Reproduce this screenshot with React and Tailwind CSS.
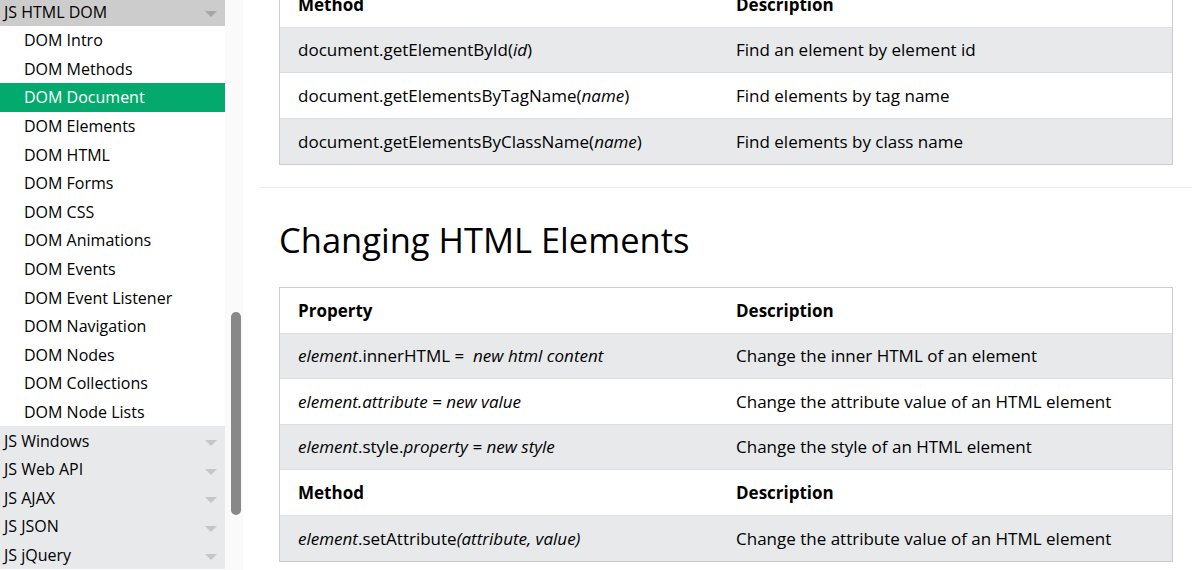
import React from "react";

const font = { fontFamily: '"Open Sans", "Noto Sans", sans-serif' };

const subItems = [
  "DOM Intro",
  "DOM Methods",
  "DOM Document",
  "DOM Elements",
  "DOM HTML",
  "DOM Forms",
  "DOM CSS",
  "DOM Animations",
  "DOM Events",
  "DOM Event Listener",
  "DOM Navigation",
  "DOM Nodes",
  "DOM Collections",
  "DOM Node Lists",
];

const topItems = ["JS Windows", "JS Web API", "JS AJAX", "JS JSON", "JS jQuery"];

function Caret({ color }) {
  return (
    <svg width="12" height="6" viewBox="0 0 12 6" className="shrink-0">
      <polygon points="0,0 12,0 6,6" fill={color} />
    </svg>
  );
}

function Sidebar() {
  return (
    <div className="w-[225px] shrink-0 -mt-[3px] text-[16px] text-black">
      <div className="h-[29px] bg-[#cccccc] flex items-center justify-between pl-[4px] pr-[8px]">
        <span>JS HTML DOM</span>
        <span className="mt-[5px]"><Caret color="#a6a6a6" /></span>
      </div>
      {subItems.map((s) => (
        <div
          key={s}
          className={`h-[28.6px] flex items-center pl-[24px] ${
            s === "DOM Document" ? "bg-[#04aa6d] text-white" : "bg-white"
          }`}
        >
          {s}
        </div>
      ))}
      {topItems.map((s) => (
        <div key={s} className="h-[28.6px] bg-[#e7e9eb] flex items-center justify-between pl-[4px] pr-[8px]">
          <span>{s}</span>
          <span className="mt-[5px]"><Caret color="#c4c6c8" /></span>
        </div>
      ))}
    </div>
  );
}

function Row({ left, right, head, gray }) {
  return (
    <div
      className={`flex h-[45.5px] border-b border-[#dddddd] last:border-b-0 items-center ${
        gray ? "bg-[#e7e9eb]" : "bg-white"
      } ${head ? "font-bold" : ""}`}
    >
      <div className="w-[438px] shrink-0 pl-[18px]">{left}</div>
      <div className="flex-1 pl-[18px]">{right}</div>
    </div>
  );
}

export default function App() {
  return (
    <div className="w-[1200px] h-[570px] overflow-hidden bg-white flex text-black" style={font}>
      <Sidebar />
      <div className="w-[18px] shrink-0 bg-[#fafafa] pt-[312px] flex justify-center">
        <div className="w-[10px] h-[203px] rounded-full bg-[#888888] ml-[4px]"></div>
      </div>
      <div className="flex-1 pl-[17px] pr-[8px] text-[17px]">
        <div className="mx-[19px] -mt-[19px] border border-[#cccccc]">
          <Row head left="Method" right="Description" />
          <Row
            gray
            left={<>document.getElementById(<i>id</i>)</>}
            right="Find an element by element id"
          />
          <Row
            left={<>document.getElementsByTagName(<i>name</i>)</>}
            right="Find elements by tag name"
          />
          <Row
            gray
            left={<>document.getElementsByClassName(<i>name</i>)</>}
            right="Find elements by class name"
          />
        </div>

        <div className="mt-[22px] h-px bg-[#eeeeee]"></div>

        <h2 className="mt-[30px] ml-[19px] h-[44px] leading-[44px] text-[34.5px] font-normal">
          Changing HTML Elements
        </h2>

        <div className="mx-[19px] mt-[25px] border border-[#cccccc]">
          <Row head left="Property" right="Description" />
          <Row
            gray
            left={<><i>element</i>.innerHTML =&nbsp; <i>new html content</i></>}
            right="Change the inner HTML of an element"
          />
          <Row
            left={<i>element.attribute = new value</i>}
            right="Change the attribute value of an HTML element"
          />
          <Row
            gray
            left={<><i>element</i>.style.<i>property = new style</i></>}
            right="Change the style of an HTML element"
          />
          <Row head left="Method" right="Description" />
          <Row
            gray
            left={<><i>element</i>.setAttribute<i>(attribute, value)</i></>}
            right="Change the attribute value of an HTML element"
          />
        </div>
      </div>
    </div>
  );
}
